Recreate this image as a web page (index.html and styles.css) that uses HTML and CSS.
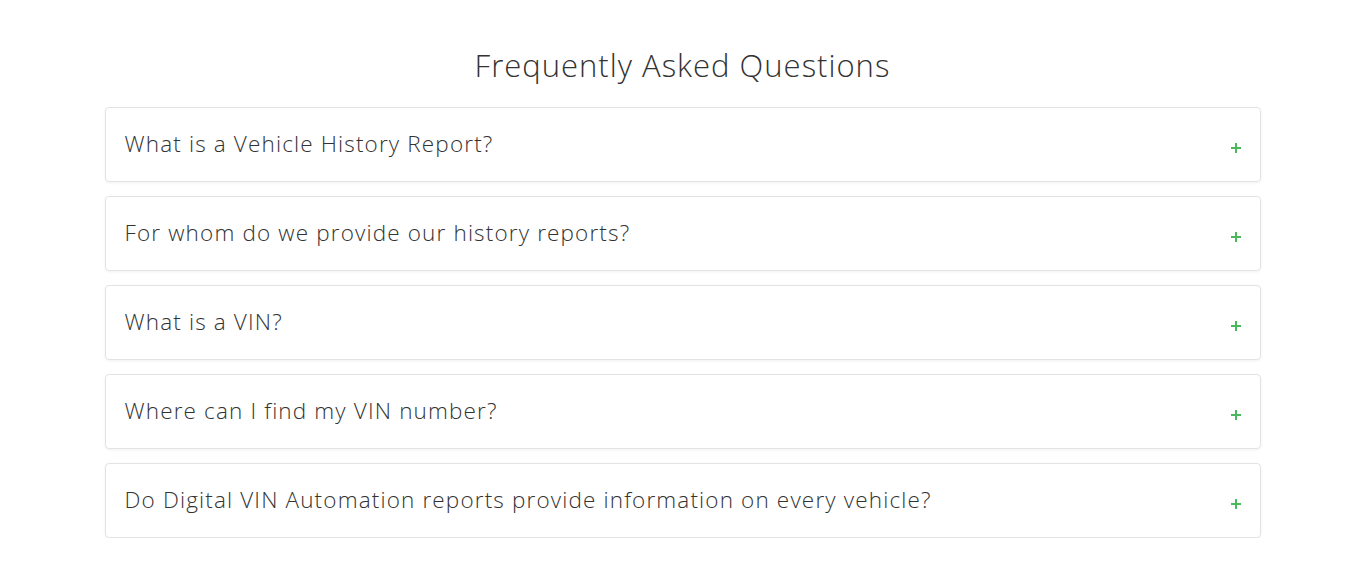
FILE: index.html
```html
<!DOCTYPE html>
<html>
<head>
<meta charset="utf-8">
<link rel="stylesheet" href="styles.css">
</head>
<body>
<section class="faq">
  <h2 class="faq-title">Frequently Asked Questions</h2>
  <div class="faq-list">
    <div class="faq-item"><span class="faq-q">What is a Vehicle History Report?</span><span class="faq-plus"></span></div>
    <div class="faq-item"><span class="faq-q">For whom do we provide our history reports?</span><span class="faq-plus"></span></div>
    <div class="faq-item"><span class="faq-q">What is a VIN?</span><span class="faq-plus"></span></div>
    <div class="faq-item"><span class="faq-q">Where can I find my VIN number?</span><span class="faq-plus"></span></div>
    <div class="faq-item"><span class="faq-q">Do Digital VIN Automation reports provide information on every vehicle?</span><span class="faq-plus"></span></div>
  </div>
</section>
</body>
</html>
```
FILE: styles.css
```css
html, body {
  margin: 0;
  padding: 0;
  background: #fff;
}
body {
  font-family: "Open Sans", "Liberation Sans", sans-serif;
  color: #333;
}
.faq {
  padding-top: 44px;
}
.faq-title {
  margin: 0 0 21px;
  text-align: center;
  font-weight: 300;
  font-size: 31px;
  line-height: 42px;
  color: #333;
  letter-spacing: 1px;
}
.faq-list {
  width: 1156px;
  margin: 0 auto;
  display: flex;
  flex-direction: column;
  gap: 14px;
}
.faq-item {
  height: 73px;
  border: 1px solid #e3e3e3;
  border-radius: 4px;
  box-shadow: 0 1px 3px rgba(0,0,0,0.06);
  display: flex;
  align-items: center;
  justify-content: space-between;
  padding: 0 19px 0 19px;
  box-sizing: content-box;
}
.faq-q {
  font-weight: 300;
  font-size: 22.5px;
  letter-spacing: 1.15px;
  color: #333;
  margin-top: -3px;
}
.faq-plus {
  position: relative;
  width: 10px;
  height: 10px;
  margin-top: 6px;
}
.faq-plus::before, .faq-plus::after {
  content: "";
  position: absolute;
  background: #4cb85c;
}
.faq-plus::before {
  left: 0; top: 4px; width: 10px; height: 2px;
}
.faq-plus::after {
  left: 4px; top: 0; width: 2px; height: 10px;
}
```
